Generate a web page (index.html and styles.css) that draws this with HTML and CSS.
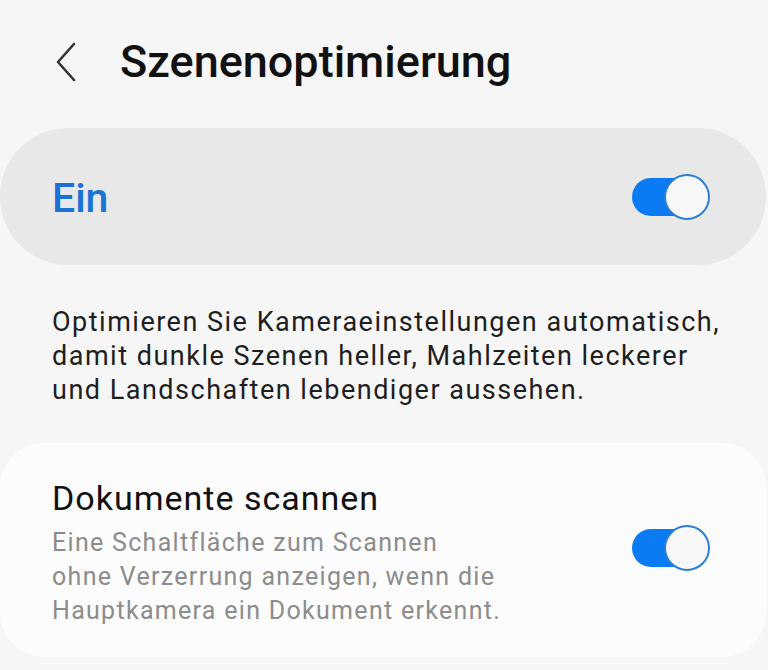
FILE: index.html
```html
<!DOCTYPE html>
<html lang="de">
<head>
<meta charset="UTF-8">
<meta name="viewport" content="width=device-width, initial-scale=1.0">
<title>Szenenoptimierung</title>
<link rel="stylesheet" href="styles.css">
</head>
<body>

<header class="topbar">
  <button class="back" aria-label="Zurück">
    <svg width="24" height="40" viewBox="0 0 24 40">
      <path d="M20 2 L4 20 L20 38" fill="none" stroke="#333" stroke-width="2.6" stroke-linecap="round" stroke-linejoin="round"/>
    </svg>
  </button>
  <h1 class="title">Szenenoptimierung</h1>
</header>

<!-- Master switch -->
<div class="master">
  <span class="master-label">Ein</span>
  <span class="switch on"><span class="knob"></span></span>
</div>

<p class="description">Optimieren Sie Kameraeinstellungen automatisch,<br>damit dunkle Szenen heller, Mahlzeiten leckerer<br>und Landschaften lebendiger aussehen.</p>

<div class="card">
  <div class="row-text">
    <div class="row-title">Dokumente scannen</div>
    <div class="row-sub">Eine Schaltfläche zum Scannen<br>ohne Verzerrung anzeigen, wenn die<br>Hauptkamera ein Dokument erkennt.</div>
  </div>
  <span class="switch on"><span class="knob"></span></span>
</div>

</body>
</html>
```

FILE: styles.css
```css
body {
  margin: 0;
  background-color: #f6f6f6;
  font-family: Roboto, "Noto Sans", Arial, sans-serif;
  color: #1b1b1b;
  width: 768px;
  height: 670px;
  overflow: hidden;
}

/* Header */
.topbar {
  display: flex;
  align-items: center;
  height: 124px;
  padding-left: 54px;
}
.back {
  background: none;
  border: none;
  padding: 0;
  margin: 0 42px 0 0;
  width: 24px;
  height: 40px;
  display: flex;
}
.title {
  margin: 0 0 2px 0;
  font-size: 45px;
  font-weight: 500;
  color: #111;
}

/* Master switch card */
.master {
  margin: 4px 2px 0 0;
  height: 137px;
  background-color: #e8e8e8;
  border-radius: 68px;
  display: flex;
  align-items: center;
  justify-content: space-between;
  padding: 0 56px 0 52px;
}
.master-label {
  font-size: 41px;
  font-weight: 500;
  color: #1a72d4;
  margin-top: 2px;
}

.description {
  margin: 40px 20px 0 52px;
  font-size: 27px;
  line-height: 34px;
  letter-spacing: 1.5px;
  color: #1e1e1e;
  white-space: nowrap;
}

/* Settings card */
.card {
  margin: 36px 2px 0 0;
  height: 214px;
  box-sizing: border-box;
  padding: 35px 56px 0 52px;
  background-color: #fcfcfc;
  border-radius: 44px;
  display: flex;
  align-items: center;
  justify-content: space-between;
}
.card .switch {
  margin-bottom: 40px;
}
.row-text {
  align-self: flex-start;
}
.row-title {
  font-size: 34px;
  line-height: 40px;
  letter-spacing: 1px;
  color: #111;
  margin-bottom: 8px;
}
.row-sub {
  font-size: 25px;
  line-height: 34px;
  letter-spacing: 1.3px;
  color: #8c8c8c;
}

/* Toggle */
.switch {
  position: relative;
  width: 78px;
  height: 46px;
  flex-shrink: 0;
}
.switch::before {
  content: "";
  position: absolute;
  left: 0;
  top: 4px;
  width: 60px;
  height: 38px;
  border-radius: 19px;
  background-color: #0a7bf2;
}
.knob {
  position: absolute;
  right: 0;
  top: 0;
  width: 42px;
  height: 42px;
  border-radius: 50%;
  background-color: #f8f8f8;
  border: 2px solid #2a7fd0;
}
```
